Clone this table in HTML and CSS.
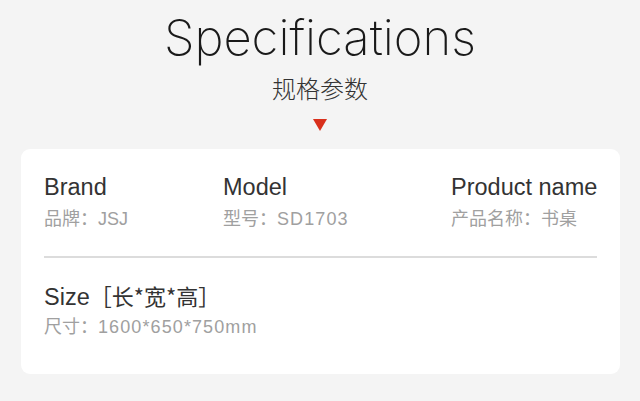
FILE: index.html
```html
<!DOCTYPE html>
<html lang="zh">
<head>
<meta charset="utf-8">
<link rel="stylesheet" href="styles.css">
</head>
<body>
<header class="head">
  <h1 class="title">Specifications</h1>
  <div class="subtitle">规格参数</div>
  <div class="arrow"></div>
</header>
<section class="card">
  <div class="row">
    <div class="item item-brand">
      <div class="label">Brand</div>
      <div class="value">品牌：JSJ</div>
    </div>
    <div class="item item-model">
      <div class="label">Model</div>
      <div class="value">型号：<span class="num">SD1703</span></div>
    </div>
    <div class="item item-name">
      <div class="label">Product name</div>
      <div class="value">产品名称：书桌</div>
    </div>
  </div>
  <div class="divider"></div>
  <div class="item item-size">
    <div class="label">Size<span class="cjk">［长*宽*高］</span></div>
    <div class="value value-size">尺寸：<span class="num">1600*650*750mm</span></div>
  </div>
</section>
</body>
</html>
```
FILE: styles.css
```css
html, body {
  margin: 0;
  padding: 0;
}
body {
  width: 640px;
  height: 401px;
  background: #f4f4f4;
  font-family: "Liberation Sans", "Noto Sans CJK SC", sans-serif;
  overflow: hidden;
}
.head {
  display: flex;
  flex-direction: column;
  align-items: center;
  padding-top: 9px;
}
.title {
  margin: 0;
  font-family: Inter, "Liberation Sans", sans-serif;
  font-weight: 200;
  font-size: 49px;
  line-height: 58px;
  color: #1a1a1a;
}
.subtitle {
  margin-top: 7px;
  font-family: "Noto Sans CJK SC", sans-serif;
  font-weight: 300;
  font-size: 24px;
  line-height: 28px;
  color: #333;
}
.arrow {
  margin-top: 17px;
  width: 0;
  height: 0;
  border-left: 7px solid transparent;
  border-right: 7px solid transparent;
  border-top: 12px solid #d9301c;
}
.card {
  margin: 18px 20px 0 21px;
  background: #fff;
  border-radius: 9px;
  padding: 25px 23px 30px 23px;
  height: 225px;
  box-sizing: border-box;
}
.row {
  display: grid;
  grid-template-columns: 179px 228px auto;
}
.item {
  white-space: nowrap;
}
.label {
  font-size: 23.5px;
  line-height: 26px;
  color: #333;
}
.cjk {
  font-family: "Noto Sans CJK SC", sans-serif;
  font-size: 22px;
}
.value {
  margin-top: 8px;
  font-size: 18px;
  line-height: 22px;
  color: #a0a0a0;
}
.value-size {
  margin-top: 6px;
}
.num {
  letter-spacing: 1.1px;
}
.divider {
  margin-top: 26px;
  height: 2px;
  background: #dcdcdc;
}
.item-size {
  margin-top: 24px;
}
```
